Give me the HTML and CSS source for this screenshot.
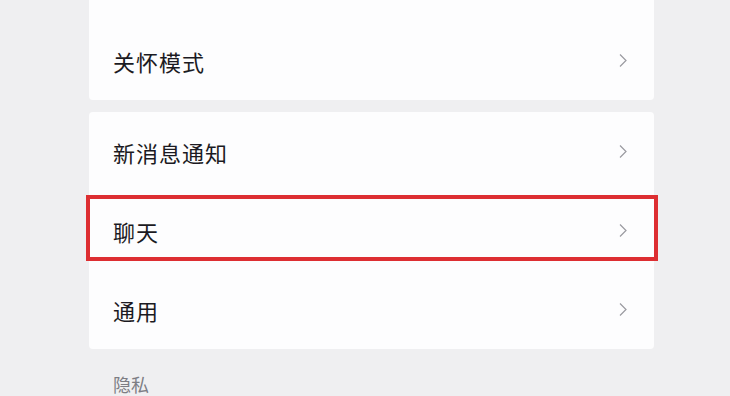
FILE: index.html
```html
<!DOCTYPE html>
<html lang="zh-CN">
<head>
    <meta charset="UTF-8">
    <meta name="viewport" content="width=device-width, initial-scale=1.0">
    <title>设置</title>
    <link rel="stylesheet" href="styles.css">
</head>
<body>
    <div class="settings">
        <!-- 关怀模式 -->
        <div class="card card-top">
            <div class="row">
                <span class="label">关怀模式</span>
                <svg class="chevron" viewBox="0 0 10 16"><path d="M2 2 L8 8 L2 14"/></svg>
            </div>
        </div>

        <!-- 消息相关 -->
        <div class="card">
            <div class="row">
                <span class="label">新消息通知</span>
                <svg class="chevron" viewBox="0 0 10 16"><path d="M2 2 L8 8 L2 14"/></svg>
            </div>
            <div class="row highlighted">
                <span class="label">聊天</span>
                <svg class="chevron" viewBox="0 0 10 16"><path d="M2 2 L8 8 L2 14"/></svg>
            </div>
            <div class="row">
                <span class="label">通用</span>
                <svg class="chevron" viewBox="0 0 10 16"><path d="M2 2 L8 8 L2 14"/></svg>
            </div>
        </div>

        <div class="section-title">隐私</div>
    </div>
</body>
</html>
```

FILE: styles.css
```css
body {
    margin: 0;
    background-color: #efeff1;
    font-family: "Noto Sans CJK SC", "Noto Sans", sans-serif;
    overflow: hidden;
}
.settings {
    width: 565px;
    margin-left: 89px;
    display: flex;
    flex-direction: column;
}
.card {
    background-color: #fdfdfe;
    border-radius: 4px;
    margin-bottom: 12px;
}
.card-top {
    padding-top: 21px;
    border-radius: 0 0 4px 4px;
}
.card-top .row {
    height: 79px;
}
.row {
    position: relative;
    height: 79px;
    display: flex;
    align-items: center;
    justify-content: space-between;
    padding: 0 26px 0 24px;
}
.label {
    font-size: 22px;
    color: #1b1a22;
    letter-spacing: 1px;
}
.chevron {
    width: 10px;
    height: 17px;
    fill: none;
    stroke: #9a9aa0;
    stroke-width: 1.2;
}
.highlighted::after {
    content: "";
    position: absolute;
    left: -3px;
    right: -4px;
    top: 4px;
    bottom: 9px;
    border: 4px solid #dd2e32;
}
.section-title {
    padding: 10px 24px 0;
    font-size: 18px;
    color: #7d7d84;
}
```
